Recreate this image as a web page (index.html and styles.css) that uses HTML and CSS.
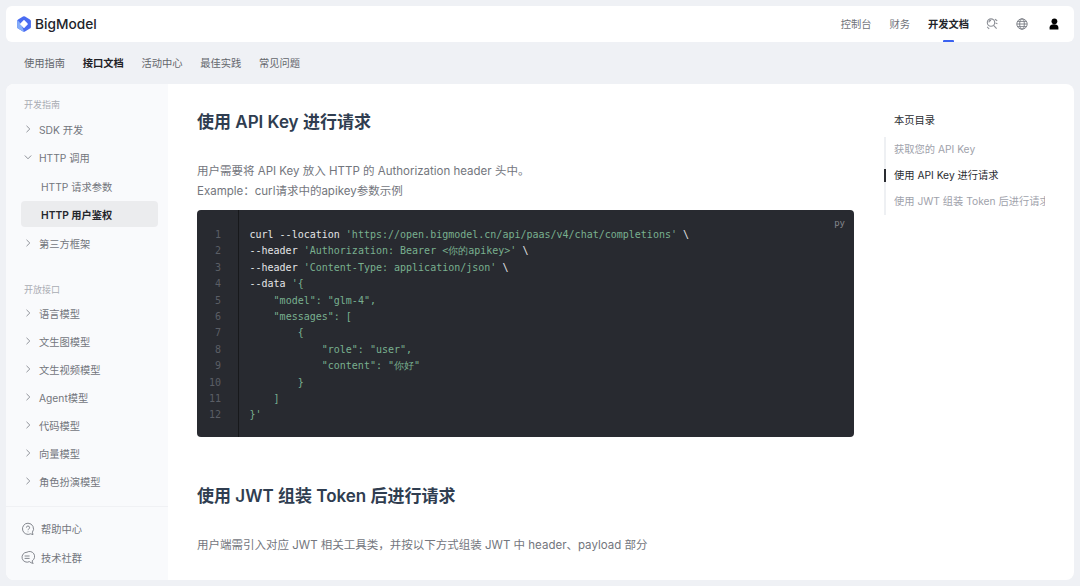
FILE: index.html
```html
<!DOCTYPE html>
<html lang="zh">
<head>
<meta charset="utf-8">
<title>BigModel</title>
<link rel="stylesheet" href="styles.css">
</head>
<body>
<header class="topbar">
  <div class="brand">
    <svg class="logo" viewBox="0 0 14 16" width="14" height="16"><path d="M6 .6a2 2 0 0 1 2 0l4.900 2.800a2 2 0 0 1 1 1.700v5.800a2 2 0 0 1-1 1.700L8 15.400a2 2 0 0 1-2 0l-4.900-2.800a2 2 0 0 1-1-1.700V5.100a2 2 0 0 1 1-1.700z" fill="#4a6cf2"/><path d="M.5 4 4 8l3 7.500-.9-.1-5-2.800a2 2 0 0 1-1-1.700V5.100z" fill="#86aef9"/><path d="M6.500 4.300a.8.8 0 0 1 1 0l3.100 3.200a.8.8 0 0 1 0 1l-3.100 3.200a.8.8 0 0 1-1 0L3.400 8.500a.8.8 0 0 1 0-1z" fill="#fff"/></svg>
    <span class="brand-name">BigModel</span>
  </div>
  <nav class="topnav">
    <a class="topnav-item">控制台</a>
    <a class="topnav-item">财务</a>
    <a class="topnav-item is-active">开发文档</a>
    <svg class="topicon" viewBox="0 0 12 12" width="12" height="12" fill="none" stroke="#8d9097" stroke-width="1.100"><circle cx="5" cy="4.600" r="3.700"/><path d="M2.800 4.400a2.300 2.300 0 0 1 2.300-2M7.600 7.300l3 3.300M8.900 1.300l2.300 1.500M9.500 5l1.900.7M1.200 8.800l2 2.200"/></svg>
    <svg class="topicon" viewBox="0 0 12 12" width="12" height="12" fill="none" stroke="#777a82" stroke-width=".9"><circle cx="6" cy="6" r="5.200"/><ellipse cx="6" cy="6" rx="2.300" ry="5.200"/><path d="M.8 6h10.400M1.600 3.400h8.800M1.600 8.600h8.800"/></svg>
    <svg class="topicon" viewBox="0 0 12 12" width="12" height="12" fill="#000"><circle cx="6.400" cy="3.300" r="2.900"/><path d="M1.600 11.500V9.400C1.600 7.400 3.700 6.300 6 6.300s4.400 1.100 4.400 3.100v2.100z"/></svg>
  </nav>
</header>
<nav class="subnav">
  <a class="subnav-item">使用指南</a>
  <a class="subnav-item is-active">接口文档</a>
  <a class="subnav-item">活动中心</a>
  <a class="subnav-item">最佳实践</a>
  <a class="subnav-item">常见问题</a>
</nav>
<main class="shell">
  <aside class="sidebar">
    <div class="side-scroll">
      <div class="side-group">开发指南</div>
      <div class="side-item"><svg class="chev" viewBox="0 0 8 8" width="8" height="8"><path d="M2.500 .8 5.800 4 2.500 7.200"/></svg>SDK 开发</div>
      <div class="side-item"><svg class="chev" viewBox="0 0 8 8" width="8" height="8"><path d="M.8 2.500 4 5.800 7.200 2.500"/></svg>HTTP 调用</div>
      <div class="side-sub">HTTP 请求参数</div>
      <div class="side-sub is-active">HTTP 用户鉴权</div>
      <div class="side-item"><svg class="chev" viewBox="0 0 8 8" width="8" height="8"><path d="M2.500 .8 5.800 4 2.500 7.200"/></svg>第三方框架</div>
      <div class="side-group side-group-next">开放接口</div>
      <div class="side-item"><svg class="chev" viewBox="0 0 8 8" width="8" height="8"><path d="M2.500 .8 5.800 4 2.500 7.200"/></svg>语言模型</div>
      <div class="side-item"><svg class="chev" viewBox="0 0 8 8" width="8" height="8"><path d="M2.500 .8 5.800 4 2.500 7.200"/></svg>文生图模型</div>
      <div class="side-item"><svg class="chev" viewBox="0 0 8 8" width="8" height="8"><path d="M2.500 .8 5.800 4 2.500 7.200"/></svg>文生视频模型</div>
      <div class="side-item"><svg class="chev" viewBox="0 0 8 8" width="8" height="8"><path d="M2.500 .8 5.800 4 2.500 7.200"/></svg>Agent模型</div>
      <div class="side-item"><svg class="chev" viewBox="0 0 8 8" width="8" height="8"><path d="M2.500 .8 5.800 4 2.500 7.200"/></svg>代码模型</div>
      <div class="side-item"><svg class="chev" viewBox="0 0 8 8" width="8" height="8"><path d="M2.500 .8 5.800 4 2.500 7.200"/></svg>向量模型</div>
      <div class="side-item"><svg class="chev" viewBox="0 0 8 8" width="8" height="8"><path d="M2.500 .8 5.800 4 2.500 7.200"/></svg>角色扮演模型</div>
    </div>
    <div class="side-foot">
      <div class="foot-item"><svg viewBox="0 0 14 14" width="14" height="14" fill="none" stroke="#777a82" stroke-width=".9"><path d="M7 1.200a5.600 5.600 0 1 0 2.600 10.600l2.400.8-.6-2.400A5.600 5.600 0 0 0 7 1.200z"/><path d="M5.400 5.600A1.600 1.600 0 1 1 7.600 7.100c-.5.3-.6.6-.6 1.100M7 9.600v.6"/></svg>帮助中心</div>
      <div class="foot-item"><svg viewBox="0 0 14 14" width="14" height="14" fill="none" stroke="#777a82" stroke-width=".9"><path d="M6 1.200a5 5 0 1 0 2.400 9.400c1 .9 2.200 1.600 3.800 1.800-.7-.8-1-1.600-1-2.600A5 5 0 0 0 6 1.200z"/><path d="M3.600 5h5M3.600 7.400h5"/></svg>技术社群</div>
    </div>
  </aside>
  <article class="doc">
    <h2 class="doc-title">使用 API Key 进行请求</h2>
    <p class="doc-text">用户需要将 API Key 放入 HTTP 的 Authorization header 头中。<br>Example：curl请求中的apikey参数示例</p>
    <div class="code">
      <span class="code-lang">py</span>
      <div class="gutter">1<br>2<br>3<br>4<br>5<br>6<br>7<br>8<br>9<br>10<br>11<br>12</div>
      <pre class="code-body"><span class="w">curl --location</span> <span class="g">'https://open.bigmodel.cn/api/paas/v4/chat/completions'</span> <span class="w">\</span>
<span class="w">--header</span> <span class="g">'Authorization: Bearer &lt;你的apikey&gt;'</span> <span class="w">\</span>
<span class="w">--header</span> <span class="g">'Content-Type: application/json'</span> <span class="w">\</span>
<span class="w">--data</span> <span class="g">'{</span>
    <span class="g">"model": "glm-4",</span>
    <span class="g">"messages": [</span>
        <span class="g">{</span>
            <span class="g">"role": "user",</span>
            <span class="g">"content": "你好"</span>
        <span class="g">}</span>
    <span class="g">]</span>
<span class="g">}'</span></pre>
    </div>
    <h2 class="doc-title doc-title-next">使用 JWT 组装 Token 后进行请求</h2>
    <p class="doc-text">用户端需引入对应 JWT 相关工具类，并按以下方式组装 JWT 中 header、payload 部分</p>
  </article>
  <aside class="toc">
    <div class="toc-title">本页目录</div>
    <div class="toc-list">
      <div class="toc-item">获取您的 API Key</div>
      <div class="toc-item is-active">使用 API Key 进行请求</div>
      <div class="toc-item">使用 JWT 组装 Token 后进行请求</div>
    </div>
  </aside>
</main>
</body>
</html>
```
FILE: styles.css
```css
* { box-sizing: border-box; }
html, body { height: 100%; }
body {
  margin: 0;
  padding: 6px;
  height: 586px;
  overflow: hidden;
  display: flex;
  flex-direction: column;
  background: #eff1f5;
  font-family: Inter, "Noto Sans CJK SC", sans-serif;
  font-size: 10.25px;
  color: #5f6268;
}
.topbar {
  height: 36px;
  flex: none;
  display: flex;
  align-items: center;
  justify-content: space-between;
  padding: 0 14px 0 11px;
  background: #fff;
  border-radius: 6px;
}
.brand { display: flex; align-items: center; gap: 4px; }
.logo { display: block; }
.brand-name { font-size: 13.7px; font-weight: 500; color: #22242a; }
.topnav { display: flex; align-items: center; height: 100%; }
.topnav-item { position: relative; margin-right: 18px; line-height: 36px; color: #6f7279; }
.topnav-item.is-active { color: #22242a; font-weight: 600; margin-right: 17px; }
.topnav-item.is-active::after {
  content: "";
  position: absolute;
  left: 15px;
  bottom: 0;
  width: 11px;
  height: 2px;
  border-radius: 1px 1px 0 0;
  background: #3b62f0;
}
.topicon { display: block; margin-right: 18px; }
.topicon + .topicon { margin-right: 20px; }
.topicon:last-child { margin-right: 0; }
.subnav {
  height: 42px;
  flex: none;
  display: flex;
  align-items: center;
  gap: 17.75px;
  padding: 0 0 2px 18px;
}
.subnav-item { color: #63666c; }
.subnav-item.is-active { color: #1f2126; font-weight: 600; }
.shell {
  height: 496px;
  flex: none;
  display: flex;
  background: #fff;
  border-radius: 8px;
  overflow: hidden;
}
.sidebar {
  width: 162px;
  flex: none;
  display: flex;
  flex-direction: column;
  background: #f9fafc;
}
.side-scroll { flex: 1; padding: 13px 10px 0 15px; overflow: hidden; }
.side-group { height: 16px; line-height: 16px; font-size: 9px; color: #a9acb3; margin-left: 3px; }
.side-group-next { margin-top: 25px; }
.side-item {
  display: flex;
  align-items: center;
  height: 28px;
  color: #73767d;
  padding-left: 3px;
}
.side-group + .side-item { margin-top: 2px; }
.side-group-next + .side-item { margin-top: 1px; }
.chev { flex: none; margin-right: 7px; fill: none; stroke: #85888f; stroke-width: .9; }
.side-sub {
  display: flex;
  align-items: center;
  height: 26px;
  margin-top: 2px;
  padding-left: 20px;
  margin-bottom: 1px;
  color: #73767d;
  border-radius: 4px;
}
.side-sub.is-active { background: #ebecee; color: #24262b; font-weight: 600; margin-top: 2px; margin-bottom: 0; }
.side-sub.is-active + .side-item { margin-top: 2px; }
.side-foot {
  height: 74px;
  flex: none;
  padding: 7px 0 0 15px;
  border-top: 1px solid #f0f1f4;
}
.foot-item { display: flex; align-items: center; gap: 6px; height: 29px; color: #73767d; }
.doc { width: 686px; flex: none; padding: 26px 0 0 29px; overflow: hidden; }
.doc-title { margin: 0; font-size: 17px; line-height: 25px; font-weight: 600; color: #2f3d50; }
.doc-title-next { margin-top: 47px; }
.doc-text { margin: 26px 0 9px; font-size: 11.5px; line-height: 20px; color: #73767d; }
.code {
  position: relative;
  display: flex;
  width: 657px;
  height: 227px;
  background: #282a30;
  border-radius: 4px;
  overflow: hidden;
  font-family: "DejaVu Sans Mono", monospace;
  font-size: 10px;
  line-height: 16.4px;
}
.code-lang { position: absolute; top: 5px; right: 9px; font-size: 9px; line-height: 16px; color: #85878d; }
.gutter {
  width: 42px;
  flex: none;
  padding: 17px 17px 0 0;
  text-align: right;
  color: #5b5e65;
  border-right: 1px solid #17181b;
}
.code-body { margin: 0; padding: 17px 0 0 10.5px; font: inherit; }
.w { color: #e4e5e7; }
.g { color: #79b08f; }
.toc { flex: 1; padding: 28px 29px 0 40px; overflow: hidden; }
.toc-title { line-height: 16px; color: #2a2c31; }
.toc-list { margin-top: 9px; margin-left: -10px; border-left: 2px solid #eef0f3; padding-left: 8px; }
.toc-item {
  position: relative;
  height: 26px;
  line-height: 24px;
  white-space: nowrap;
  overflow: hidden;
  color: #a0a2ab;
  width: 151px;
}
.toc-item.is-active { color: #2a2c31; overflow: visible; }
.toc-item.is-active::before {
  content: "";
  position: absolute;
  left: -10px;
  top: 6px;
  width: 2px;
  height: 13px;
  background: #2a2c31;
}
```
